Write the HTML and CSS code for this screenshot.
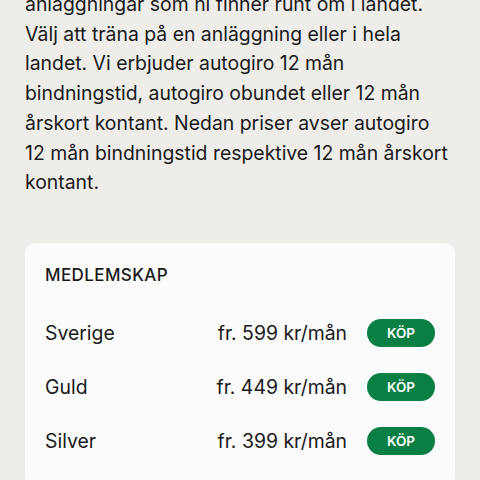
FILE: index.html
```html
<!DOCTYPE html>
<html>

<head>
  <meta charset="UTF-8">
  <title>Medlemskap</title>
  <link rel="stylesheet" href="styles.css">
</head>

<body>
  <p class="intro">anläggningar som ni finner runt om i landet.<br>Välj att träna på en anläggning eller i hela<br>landet. Vi erbjuder autogiro 12 mån<br>bindningstid, autogiro obundet eller 12 mån<br>årskort kontant. Nedan priser avser autogiro<br>12 mån bindningstid respektive 12 mån årskort<br>kontant.</p>

  <div class="card">
    <h3>MEDLEMSKAP</h3>

    <div class="row">
      <span class="name">Sverige</span>
      <span class="price">fr. 599 kr/mån</span>
      <button>KÖP</button>
    </div>
    <div class="row">
      <span class="name">Guld</span>
      <span class="price">fr. 449 kr/mån</span>
      <button>KÖP</button>
    </div>
    <div class="row">
      <span class="name">Silver</span>
      <span class="price">fr. 399 kr/mån</span>
      <button>KÖP</button>
    </div>
  </div>
</body>

</html>
```

FILE: styles.css
```css
body {
  font-family: Inter, "Noto Sans", sans-serif;
  margin: 0;
  padding: 0 25px;
  background: #eeedea;
  color: #1a1a1a;
}

.intro {
  margin: -10px 0 45px;
  font-size: 19.4px;
  line-height: 29.7px;
  white-space: nowrap;
}

.card {
  background: #fbfbfb;
  border-radius: 10px;
  padding: 20px 20px 20px;
}

h3 {
  margin: 0 0 19px;
  font-size: 17px;
  font-weight: 500;
  line-height: 24px;
  letter-spacing: 0.4px;
}

.row {
  display: flex;
  align-items: center;
  height: 54px;
  font-size: 19.4px;
}

.name {
  flex: 1;
}

.price {
  margin-right: 20px;
}

button {
  width: 68px;
  height: 28px;
  border: none;
  border-radius: 14px;
  background-color: #0a7f45;
  color: white;
  font-family: Inter, sans-serif;
  font-size: 13.5px;
  font-weight: 600;
  cursor: pointer;
}
```
